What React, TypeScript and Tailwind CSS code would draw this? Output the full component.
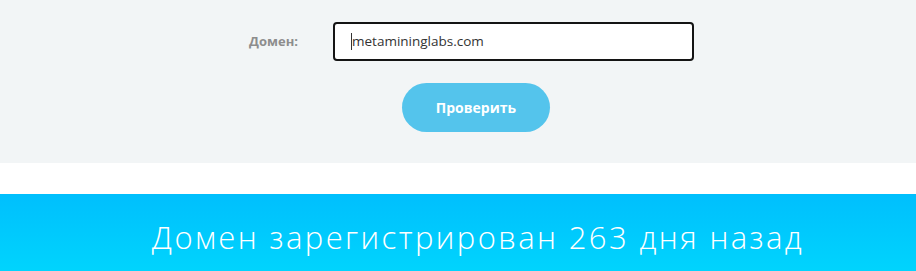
export default function App() {
  return (
    <div className="min-h-screen bg-white font-['Open_Sans',sans-serif]">
      {/* Form */}
      <div className="bg-[#f2f5f6] pt-[22px] pb-[31px]">
        <div className="flex items-center justify-center pl-[27px]">
          <label className="w-[84px] text-[13px] font-bold text-[#8d8d8d]">Домен:</label>
          <div className="w-[361px] h-[39px] rounded-[4px] border-2 border-[#141414] bg-white flex items-center pl-[16px]">
            <span className="h-[17px] w-px bg-[#333]" />
            <span className="text-[13.5px] text-[#333]">metamininglabs.com</span>
          </div>
        </div>
        <div className="flex justify-center pl-[36px] mt-[22px]">
          <button className="w-[148px] h-[49px] rounded-full bg-[#54c4ec] text-white text-[14px] font-bold">
            Проверить
          </button>
        </div>
      </div>

      <div className="h-[31px]" />

      {/* Result */}
      <div className="bg-gradient-to-b from-[#00bffd] to-[#00d4fd] h-[77px] pt-[23px] pl-[40px] flex justify-center">
        <h2 className="text-[31px] font-light tracking-[2.4px] leading-[40px] text-white">
          Домен зарегистрирован 263 дня назад
        </h2>
      </div>
    </div>
  );
}
